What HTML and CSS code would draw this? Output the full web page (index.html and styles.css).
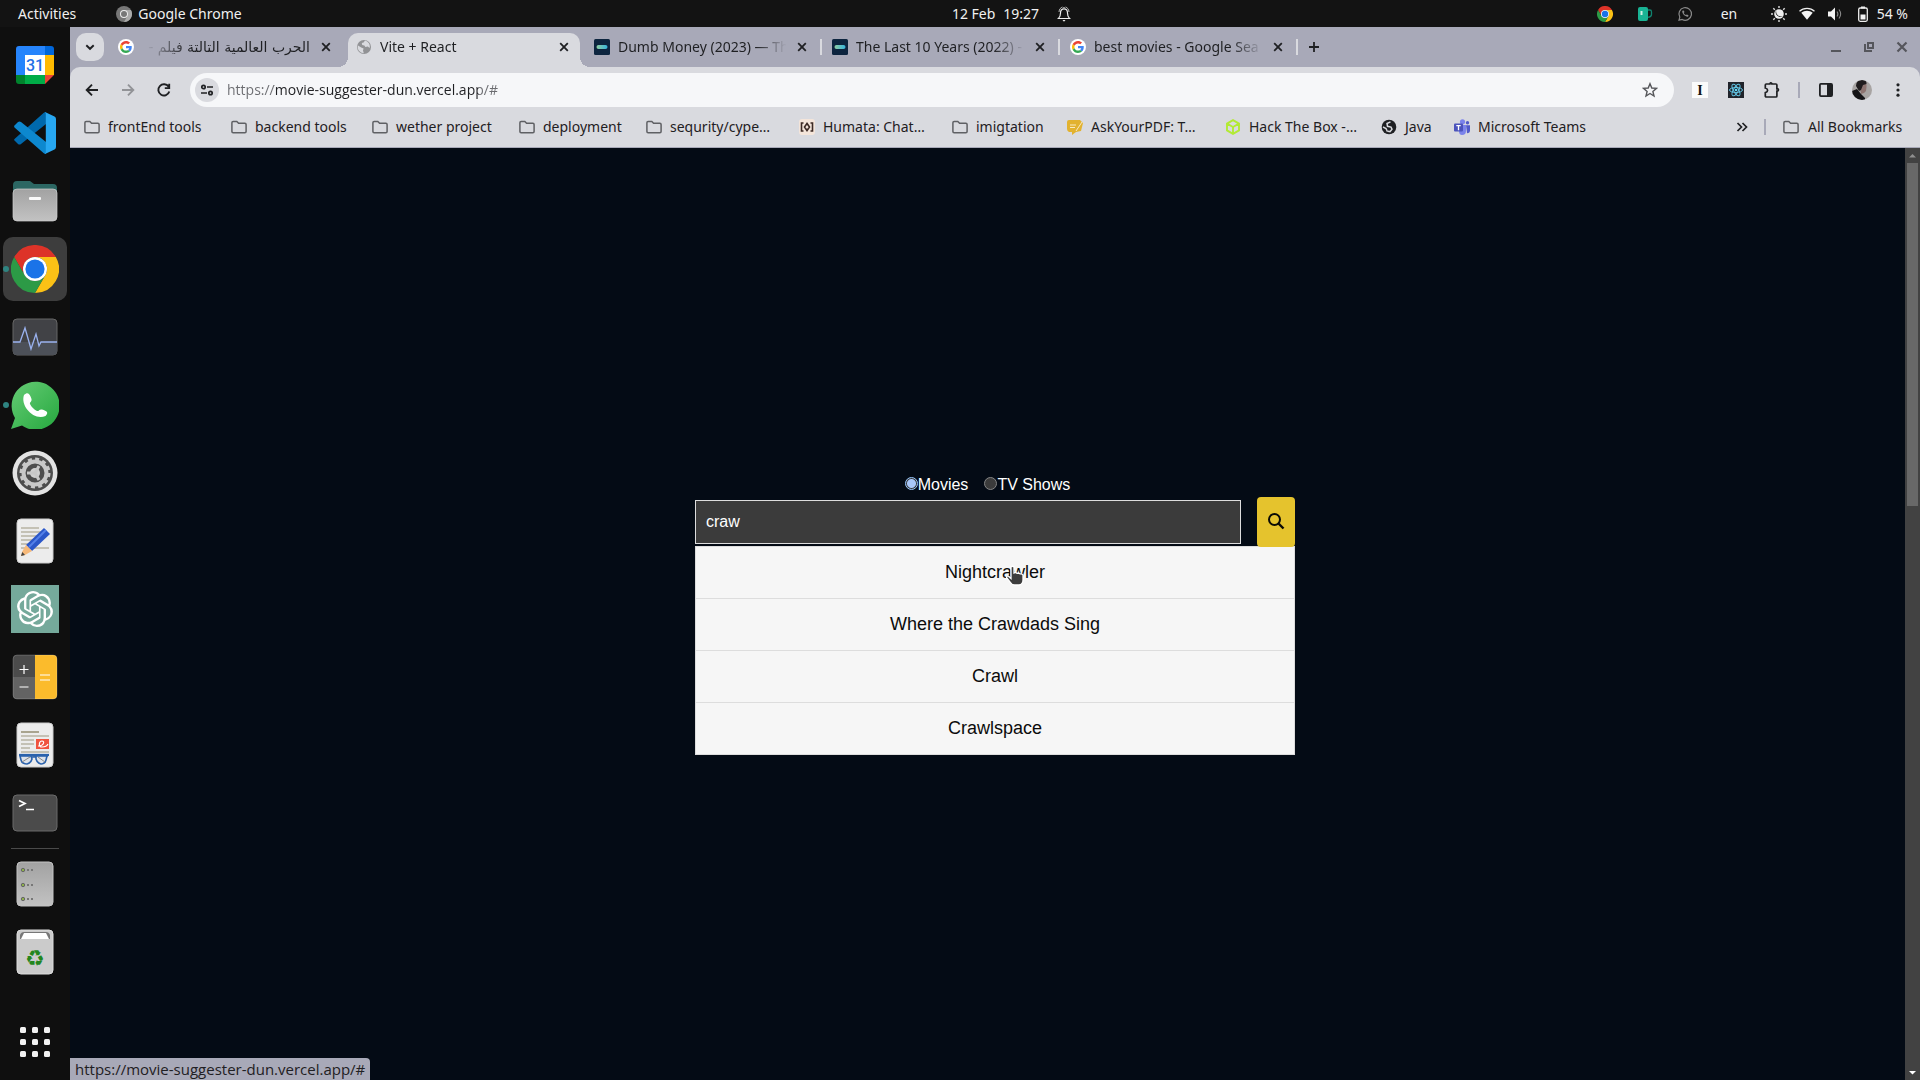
FILE: index.html
```html
<!DOCTYPE html>
<html lang="en">
<head>
<meta charset="utf-8">
<title>Vite + React</title>
<link rel="stylesheet" href="styles.css">
</head>
<body>
<svg class="defs" aria-hidden="true">
  <symbol id="chrome" viewBox="0 0 48 48">
    <path fill="#dd3328" d="M3.2 12A24 24 0 0 1 44.8 12H24A12 12 0 0 0 13.6 30Z"/>
    <path fill="#fbc116" d="M44.8 12A24 24 0 0 1 24 48L34.4 30A12 12 0 0 0 24 12Z"/>
    <path fill="#2c9a46" d="M24 48A24 24 0 0 1 3.2 12L13.6 30A12 12 0 0 0 34.4 30Z"/>
    <circle cx="24" cy="24" r="12" fill="#fff"/><circle cx="24" cy="24" r="9.6" fill="#1a73e8"/>
  </symbol>
  <symbol id="google" viewBox="0 0 16 16">
    <circle cx="8" cy="8" r="8" fill="#fff"/>
    <g transform="translate(2 2) scale(.25)">
      <path fill="#ea4335" d="M24 9.5c3.54 0 6.71 1.22 9.21 3.6l6.85-6.85C35.9 2.38 30.47 0 24 0 14.62 0 6.51 5.38 2.56 13.22l7.98 6.19C12.43 13.72 17.74 9.5 24 9.5z"/>
      <path fill="#4285f4" d="M46.98 24.55c0-1.57-.15-3.09-.38-4.55H24v9.02h12.94c-.58 2.96-2.26 5.48-4.78 7.18l7.73 6c4.51-4.18 7.09-10.36 7.09-17.65z"/>
      <path fill="#fbbc05" d="M10.53 28.59c-.48-1.45-.76-2.99-.76-4.59s.27-3.14.76-4.59l-7.98-6.19C.92 16.46 0 20.12 0 24c0 3.88.92 7.54 2.56 10.78l7.97-6.19z"/>
      <path fill="#34a853" d="M24 48c6.48 0 11.93-2.13 15.89-5.81l-7.73-6c-2.15 1.45-4.92 2.3-8.16 2.3-6.26 0-11.57-4.22-13.47-9.91l-7.98 6.19C6.51 42.62 14.62 48 24 48z"/>
    </g>
  </symbol>
  <symbol id="tmdb" viewBox="0 0 16 16">
    <defs><linearGradient id="tm"><stop offset="0" stop-color="#90cea1"/><stop offset="1" stop-color="#35b4dd"/></linearGradient></defs>
    <rect width="16" height="16" rx="1.5" fill="#0d253f"/><rect x="2.5" y="6" width="11" height="4" rx="2" fill="url(#tm)"/>
  </symbol>
  <symbol id="globe" viewBox="0 0 16 16">
    <circle cx="8" cy="8" r="7" fill="#919295"/>
    <path fill="#d9dadf" d="M9 1.6 7.6 3.4 5.8 4l.4 2 2.2.4 1 1.6 2.4-.4L13.6 9A6 6 0 0 0 9 1.6ZM2 6.4l3.2 2.2 2.4.8L7 11.6l.8 2.6A6 6 0 0 1 2 6.4Z"/>
  </symbol>
  <symbol id="x" viewBox="0 0 16 16"><path d="M4.2 4.2l7.6 7.6M11.8 4.2l-7.6 7.6" fill="none" stroke="currentColor" stroke-width="1.8"/></symbol>
  <symbol id="folder" viewBox="0 0 16 16"><path d="M.9 3.8q0-1.4 1.2-1.4h3.7l1.8 1.9h6.3q1.2 0 1.2 1.2v7q0 1.2-1.2 1.2H2.1q-1.2 0-1.2-1.2Z" fill="none" stroke="#5f6064" stroke-width="1.5"/></symbol>
</svg>

<header class="topbar">
  <div class="topbar-left">
    <button class="activities">Activities</button>
    <button class="appmenu">
      <svg width="16" height="16" viewBox="0 0 48 48"><circle cx="24" cy="24" r="24" fill="#777"/><path fill="#aaa" d="M44.8 12A24 24 0 0 1 24 48L34.4 30A12 12 0 0 0 24 12Z"/><circle cx="24" cy="24" r="12" fill="#eee"/><circle cx="24" cy="24" r="9" fill="#777"/></svg>
      Google Chrome
    </button>
  </div>
  <button class="clock"><span>12 Feb</span><span>19:27</span>
    <svg class="bell" width="16" height="16" viewBox="0 0 16 16"><path d="M2.5 12.5h11c-1.6-1.4-2-2.6-2-5.500 0-2.800-1.300-4.200-3.500-4.200S4.500 4.200 4.500 7c0 2.900-.4 4.100-2 5.500Z" fill="none" stroke="#eee" stroke-width="1.200"/><path d="M6.500 14h3l-1.500 1.700ZM6.800 1.800a1.300 1.300 0 0 1 2.400 0" fill="#eee"/><path d="M3 6c.2-2.800 1.600-4.400 3.500-5M13 6c-.2-2.800-1.600-4.400-3.500-5" fill="none" stroke="#bbb"/></svg>
  </button>
  <div class="tray">
    <svg width="16" height="16"><use href="#chrome"/></svg>
    <svg width="16" height="16" viewBox="0 0 16 16"><path d="M10.500 4h2.300q1.700 0 1.700 1.700v2.600q0 2.200-2.200 2.700l-1.800.4" fill="none" stroke="#10836f" stroke-width="1.300"/><rect x="1" y="1" width="10" height="14" rx="2" fill="#19b394"/><rect x="3.500" y="5" width="2" height="4" fill="#d4efe6"/></svg>
    <svg width="16" height="16" viewBox="0 0 16 16"><path d="M2 14.200l.8-3A6.300 6.300 0 1 1 5.200 13.500Z" fill="none" stroke="#8a8a8a" stroke-width="1.200"/><path d="M5.300 4.800c-.6 2.600 3 6.400 5.800 5.900l.4-1.400-1.600-.9-.9.700c-1-.4-1.800-1.300-2.200-2.200l.7-.8-.8-1.700Z" fill="#8a8a8a"/></svg>
    <span class="lang">en</span>
    <div class="status-icons">
      <svg width="16" height="16" viewBox="0 0 16 16"><path d="M8 0v2M8 14v2M0 8h2M14 8h2M2.300 2.300l1.500 1.500M12.200 12.200l1.500 1.500M2.300 13.700l1.500-1.500M12.200 3.800l1.500-1.500" stroke="#ddd" stroke-width="1.400"/><circle cx="8" cy="8" r="4.800" fill="#eee"/><path d="M5.500 3.800A4.500 4.500 0 0 0 11.800 10 4.800 4.800 0 0 1 5.500 3.800" fill="#131313"/><circle cx="9.200" cy="6.800" r="2.700" fill="#eee"/></svg>
      <svg width="16" height="16" viewBox="0 0 16 16"><path d="M.5 5.200C4.500 1.300 11.500 1.300 15.500 5.200" fill="none" stroke="#eee" stroke-width="1.200"/><path d="M2.300 6.800C5.500 3.900 10.500 3.900 13.700 6.800L8 13.800Z" fill="#f4f4f4"/></svg>
      <svg width="16" height="16" viewBox="0 0 16 16"><path d="M1 5.500h3L8 1.500v13L4 10.500H1Z" fill="#f4f4f4"/><path d="M10 5.500q1.800 2.500 0 5M12 3.500q3.300 4.500 0 9" fill="none" stroke="#888" stroke-width="1.100"/></svg>
      <svg width="16" height="16" viewBox="0 0 16 16"><path d="M6 .5h4v2H6Z" fill="#eee"/><rect x="3.700" y="2" width="8.600" height="13.300" rx="1.500" fill="none" stroke="#eee" stroke-width="1.300"/><path d="M5.500 8.500h5v5h-5Z" fill="#f4f4f4"/></svg>
    </div>
    <span class="battery">54 %</span>
  </div>
</header>

<div class="desktop">
  <nav class="dock" aria-label="Dock">
    <button aria-label="Calendar"><svg width="38" height="38" viewBox="0 0 38 38"><path d="M3 0h26v9H9v20H0V3Q0 0 3 0" fill="#2684fc"/><path d="M29 0h6q3 0 3 3v6h-9Z" fill="#0066da"/><path d="M29 9h9v20h-9Z" fill="#ffba00"/><path d="M9 29h20v9H9Z" fill="#00ac47"/><path d="M0 29h9v9H3q-3 0-3-3Z" fill="#00832d"/><path d="M29 29h9l-9 9Z" fill="#ea4335"/><path d="M9 9h20v20H9Z" fill="#fff"/><text x="19" y="25" text-anchor="middle" class="cal-day">31</text></svg></button>
    <button aria-label="Visual Studio Code"><svg width="42" height="42" viewBox="0 0 42 42"><path d="M0 28l4 4q1.500 1 3 0L32 12V0q-1.500 0-2.500 1L.5 27Z" fill="#0069ad"/><path d="M0 14l4-4q1.500-1 3 0L32 30v12q-1.500 0-2.500-1L.5 15.500Z" fill="#0d88cf"/><path d="M31 0l9.500 4.500q1.500.8 1.500 2.500v28q0 1.700-1.500 2.500L31 42q.8-.4.800-2V2q0-1.500-.8-2" fill="#27a7f1"/></svg></button>
    <button aria-label="Files"><svg width="46" height="42" viewBox="0 0 46 42"><defs><linearGradient id="gr" x2="0" y2="1"><stop stop-color="#a2a2a2"/><stop offset="1" stop-color="#c2c2c2"/></linearGradient></defs><path d="M1 30V5q0-4 4-4h13l4 3h19q4 0 4 4v22Z" fill="#2c6763"/><rect x="1" y="9" width="44" height="32" rx="4" fill="url(#gr)" stroke="#d0d0d0" stroke-width=".7"/><rect x="17" y="17" width="12" height="3" rx="1" fill="#fafafa"/></svg></button>
    <button class="running focused" aria-label="Google Chrome"><svg width="48" height="48"><use href="#chrome"/></svg></button>
    <button aria-label="System Monitor"><svg width="46" height="38" viewBox="0 0 46 38"><rect x="1" y="1" width="44" height="36" rx="4" fill="#414246" stroke="#666"/><path d="M1 24h44v9q0 4-4 4H5q-4 0-4-4Z" fill="#4c5058"/><path d="M1 24h7l5-14 6 21 5-15 3 12 2-4h16" fill="none" stroke="#9ab2ef" stroke-width="1.300"/></svg></button>
    <button class="running" aria-label="WhatsApp"><svg width="48" height="48" viewBox="0 0 48 48"><defs><linearGradient id="wa" x2="1" y2="1"><stop stop-color="#66cc75"/><stop offset="1" stop-color="#25a83e"/></linearGradient></defs><path d="M0 48l4-11A24 24 0 1 1 11 44.500Z" fill="url(#wa)"/><path d="M13 14c4-4 6-1 7.500 4 .5 3-2 3-1.500 5 1.500 3 4 5.500 7 7 2 .5 2-2 5-1.500 5 1.500 7 3 3.500 6.500C23 40 9 25 13 14Z" fill="#fff"/></svg></button>
    <button aria-label="Settings"><svg width="46" height="46" viewBox="0 0 46 46"><circle cx="23" cy="23" r="22.500" fill="#e3e3e3"/><circle cx="23" cy="23" r="18" fill="#4d4d4d"/><circle cx="23" cy="23" r="14" fill="none" stroke="#c8c8c8" stroke-width="3" stroke-dasharray="4 3.300"/><circle cx="23" cy="23" r="11.500" fill="none" stroke="#c8c8c8" stroke-width="4"/><circle cx="23" cy="23" r="5" fill="#d0d0d0"/><path d="M23 23h-8M23 23l4-7M23 23l4 7" stroke="#c8c8c8" stroke-width="3"/></svg></button>
    <button aria-label="Text Editor"><svg width="38" height="46" viewBox="0 0 38 46"><rect x="1" y="1" width="36" height="44" rx="4" fill="#ececec" stroke="#ccc"/><path d="M5 10h18M5 14h24M5 18h20M5 22h16M5 26h14M5 30h28" stroke="#c4c1b5" stroke-width="2"/><path d="M28 10l6 6-18 17-6-6Z" fill="#2b57c8"/><path d="M30 12l-17 17" stroke="#5480e8" stroke-width="2"/><path d="M10 27l6 6-7 4-4 1 1-4Z" fill="#f6b97a"/><path d="M5 38l1.300-4 2.700 3Z" fill="#444"/></svg></button>
    <button aria-label="ChatGPT"><svg width="48" height="48" viewBox="0 0 48 48"><path fill="#75a99b" d="M0 0h48v48H0Z"/><path fill="#fff" transform="translate(6 6) scale(1.500)" d="M22.2819 9.8211a5.9847 5.9847 0 0 0-.5157-4.9108 6.0462 6.0462 0 0 0-6.5098-2.9A6.0651 6.0651 0 0 0 4.9807 4.1818a5.9847 5.9847 0 0 0-3.9977 2.9 6.0462 6.0462 0 0 0 .7427 7.0966 5.98 5.98 0 0 0 .511 4.9107 6.051 6.051 0 0 0 6.5146 2.9001A5.9847 5.9847 0 0 0 13.2599 24a6.0557 6.0557 0 0 0 5.7718-4.2058 5.9894 5.9894 0 0 0 3.9977-2.9001 6.0557 6.0557 0 0 0-.7475-7.0729zm-9.022 12.6081a4.4755 4.4755 0 0 1-2.8764-1.0408l.1419-.0804 4.7783-2.7582a.7948.7948 0 0 0 .3927-.6813v-6.7369l2.02 1.1686a.071.071 0 0 1 .038.052v5.5826a4.504 4.504 0 0 1-4.4945 4.4944zm-9.6607-4.1254a4.4708 4.4708 0 0 1-.5346-3.0137l.142.0852 4.783 2.7582a.7712.7712 0 0 0 .7806 0l5.8428-3.3685v2.3324a.0804.0804 0 0 1-.0332.0615L9.74 19.9502a4.4992 4.4992 0 0 1-6.1408-1.6464zM2.3408 7.8956a4.485 4.485 0 0 1 2.3655-1.9728V11.6a.7664.7664 0 0 0 .3879.6765l5.8144 3.3543-2.0201 1.1685a.0757.0757 0 0 1-.071 0l-4.8303-2.7865A4.504 4.504 0 0 1 2.3408 7.872zm16.5963 3.8558L13.1038 8.364 15.1192 7.2a.0757.0757 0 0 1 .071 0l4.8303 2.7913a4.4944 4.4944 0 0 1-.6765 8.1042v-5.6772a.79.79 0 0 0-.407-.667zm2.0107-3.0231l-.142-.0852-4.7735-2.7818a.7759.7759 0 0 0-.7854 0L9.409 9.2297V6.8974a.0662.0662 0 0 1 .0284-.0615l4.8303-2.7866a4.4992 4.4992 0 0 1 6.6802 4.66zM8.3065 12.863l-2.02-1.1638a.0804.0804 0 0 1-.038-.0567V6.0742a4.4992 4.4992 0 0 1 7.3757-3.4537l-.142.0805L8.704 5.459a.7948.7948 0 0 0-.3927.6813zm1.0976-2.3654l2.602-1.4998 2.6069 1.4998v2.9994l-2.5974 1.4997-2.6067-1.4997Z"/></svg></button>
    <button aria-label="Calculator"><svg width="46" height="46" viewBox="0 0 46 46"><path d="M23 1v22H1V5q0-4 4-4Z" fill="#4b4b4b"/><path d="M1 23h22v22H5q-4 0-4-4Z" fill="#636363"/><path d="M23 1h18q4 0 4 4v36q0 4-4 4H23Z" fill="#fbbb2c"/><rect x="1" y="1" width="44" height="44" rx="4" fill="none" stroke="#fff" stroke-opacity=".2"/><path d="M7.500 15.500h9M12 11v9M7.500 33h9M28 21h10M28 26h10" stroke="#fff" stroke-width="1.200"/></svg></button>
    <button aria-label="Document Viewer"><svg width="38" height="46" viewBox="0 0 38 46"><rect x="1" y="1" width="36" height="44" rx="4" fill="#ececec" stroke="#ccc"/><path d="M5 10h18" stroke="#a9a48f" stroke-width="2"/><path d="M5 14h28M5 18h13M5 22h13M5 26h9M5 30h28" stroke="#c4c1b5" stroke-width="2"/><path d="M20 17h13v10H20Z" fill="#f0533f"/><path d="M22 24c6 0 7-5 4-5s-4 6 0 6 5-1 6-3" fill="none" stroke="#fff" stroke-width="1.200"/><path d="M4 34l10-1 4 1h2l4-1 8 1" fill="none" stroke="#555" stroke-width="1.500"/><path d="M4 34h11l1 3q-1 4-5 5-5 0-6-4ZM20 34h11l-1 4q-1 4-5 4-4-1-5-5ZM16 35h4" fill="#dde2ea" stroke="#2a62ad" stroke-width="1.600"/><path d="M3 33h30" stroke="#2a62ad" stroke-width="2.200"/><path d="M6 40l8-5M22 35l7 5" stroke="#888"/></svg></button>
    <button aria-label="Terminal"><svg width="46" height="38" viewBox="0 0 46 38"><rect x="1" y="1" width="44" height="36" rx="4" fill="#4b4b4b" stroke="#6a6a6a"/><path d="M7 6.500l6 3-6 3M14 15.500h8" fill="none" stroke="#fff" stroke-width="1.700"/></svg></button>
    <hr>
    <button aria-label="Server"><svg width="38" height="46" viewBox="0 0 38 46"><rect x="1" y="1" width="36" height="44" rx="4" fill="url(#gr)" stroke="#c4c4c4"/><g fill="#8db04a" stroke="#666"><circle cx="7" cy="9" r="1.700"/><circle cx="7" cy="24" r="1.700"/><circle cx="7" cy="38" r="1.700"/></g><path d="M11 9h2m2 0h2M11 24h2m2 0h2M11 38h2m2 0h2" stroke="#777" stroke-width="2"/></svg></button>
    <button aria-label="Trash"><svg width="38" height="46" viewBox="0 0 38 46"><rect x="1" y="1" width="36" height="44" rx="4" fill="#cbcbcb" stroke="#ddd"/><path d="M4 10V6q1-3 4-3h22q3 0 4 3v4Z" fill="#777"/><path d="M5 10l3-6h22l3 6Z" fill="#fff"/><text x="19" y="37" text-anchor="middle" class="recycle">♻</text></svg></button>
    <button class="show-apps" aria-label="Show Applications"><svg width="30" height="30" viewBox="0 0 30 30" fill="#f2f2f2"><rect width="6" height="6" rx="1.500"/><rect x="12" width="6" height="6" rx="1.500"/><rect x="24" width="6" height="6" rx="1.500"/><rect y="12" width="6" height="6" rx="1.500"/><rect x="12" y="12" width="6" height="6" rx="1.500"/><rect x="24" y="12" width="6" height="6" rx="1.500"/><rect y="24" width="6" height="6" rx="1.500"/><rect x="12" y="24" width="6" height="6" rx="1.500"/><rect x="24" y="24" width="6" height="6" rx="1.500"/></svg></button>
  </nav>

  <div class="browser">
    <div class="tabstrip">
      <button class="tab-search" aria-label="Search tabs"><svg width="16" height="16" viewBox="0 0 16 16"><path d="M4.300 6.200L8 9.800l3.700-3.600" fill="none" stroke="#1f2023" stroke-width="1.900"/></svg></button>
      <div class="tabs">
        <div class="tab"><svg width="16" height="16"><use href="#google"/></svg><span class="title rtl" dir="rtl" lang="ar">الحرب العالمية التالتة فيلم -</span><button aria-label="Close"><svg width="16" height="16"><use href="#x"/></svg></button></div>
        <div class="tab active"><svg width="16" height="16"><use href="#globe"/></svg><span class="title">Vite + React</span><button aria-label="Close"><svg width="16" height="16"><use href="#x"/></svg></button></div>
        <div class="tab divided"><svg width="16" height="16"><use href="#tmdb"/></svg><span class="title">Dumb Money (2023) — Th</span><button aria-label="Close"><svg width="16" height="16"><use href="#x"/></svg></button></div>
        <div class="tab divided"><svg width="16" height="16"><use href="#tmdb"/></svg><span class="title">The Last 10 Years (2022) -</span><button aria-label="Close"><svg width="16" height="16"><use href="#x"/></svg></button></div>
        <div class="tab divided"><svg width="16" height="16"><use href="#google"/></svg><span class="title">best movies - Google Sea</span><button aria-label="Close"><svg width="16" height="16"><use href="#x"/></svg></button></div>
      </div>
      <button class="new-tab" aria-label="New tab"><svg width="16" height="16" viewBox="0 0 16 16"><path d="M8 3v10M3 8h10" stroke="#1f2023" stroke-width="1.800"/></svg></button>
      <div class="window-controls">
        <button aria-label="Minimize"><svg width="16" height="16" viewBox="0 0 16 16"><path d="M3 12h10" stroke="#55565c" stroke-width="2"/></svg></button>
        <button aria-label="Restore"><svg width="16" height="16" viewBox="0 0 16 16"><path d="M7 4h5v5H7ZM4 5v7h7" fill="none" stroke="#55565c" stroke-width="2"/></svg></button>
        <button aria-label="Close window"><svg width="16" height="16" viewBox="0 0 16 16"><path d="M3.500 3.500l9 9M12.500 3.500l-9 9" stroke="#55565c" stroke-width="2.200"/></svg></button>
      </div>
    </div>

    <div class="toolbar">
      <div class="nav-buttons">
        <button aria-label="Back"><svg width="16" height="16" viewBox="0 0 16 16"><path d="M14 8H3M8 2.700L2.700 8 8 13.300" fill="none" stroke="#1f2023" stroke-width="1.900"/></svg></button>
        <button aria-label="Forward"><svg width="16" height="16" viewBox="0 0 16 16"><path d="M2 8h11M8 2.700L13.300 8 8 13.300" fill="none" stroke="#929397" stroke-width="1.900"/></svg></button>
        <button aria-label="Reload"><svg width="16" height="16" viewBox="0 0 16 16"><path d="M13.300 9.500A5.600 5.600 0 1 1 12.600 4.800M13.200 1.800v4.300H8.800" fill="none" stroke="#1f2023" stroke-width="1.900"/></svg></button>
      </div>
      <div class="omnibox">
        <button class="site-info" aria-label="View site information"><svg width="16" height="16" viewBox="0 0 16 16"><g fill="none" stroke="#1f2023" stroke-width="1.700"><circle cx="4.500" cy="5" r="1.700"/><circle cx="11.500" cy="11" r="1.700"/><path d="M8 5h6M2 11h6"/></g></svg></button>
        <input class="url" type="text" aria-label="Address" value="https://movie-suggester-dun.vercel.app/#">
        <button aria-label="Bookmark this tab"><svg width="16" height="16" viewBox="0 0 16 16"><path d="M8 1.700l1.800 4.300 4.700.4-3.600 3 1.100 4.600L8 11.500 4 14l1.100-4.600-3.600-3L6.200 6Z" fill="none" stroke="#55565a" stroke-width="1.400"/></svg></button>
      </div>
      <div class="extensions">
        <button aria-label="Instapaper"><svg width="16" height="16" viewBox="0 0 16 16"><path fill="#fafafa" d="M0 0h16v16H0Z"/><text x="8" y="13" text-anchor="middle" class="insta">I</text></svg></button>
        <button aria-label="React Developer Tools"><svg width="16" height="16" viewBox="0 0 16 16"><path fill="#20232a" d="M0 0h16v16H0Z"/><g fill="none" stroke="#61c3e3"><ellipse cx="8" cy="8" rx="6.500" ry="2.500"/><ellipse cx="8" cy="8" rx="6.500" ry="2.500" transform="rotate(60 8 8)"/><ellipse cx="8" cy="8" rx="6.500" ry="2.500" transform="rotate(120 8 8)"/></g><circle cx="8" cy="8" r="1.300" fill="#61dafb"/></svg></button>
        <button aria-label="Extensions"><svg width="18" height="18" viewBox="0 0 18 18"><path d="M2.300 4q0-1 1-1h3.600V2.600q.8-1.400 2 0V3h4q1 0 1 1v3.800h.8q1.500.9 0 2.200h-.8v5q0 1-1 1H3.300q-1 0-1-1v-3.400q2.300-.6 2.300-2.300T2.300 7Z" fill="none" stroke="#1f2023" stroke-width="1.700"/></svg></button>
        <span class="sep"></span>
        <button aria-label="Side panel"><svg width="16" height="16" viewBox="0 0 16 16"><rect x="1.900" y="1.900" width="12.200" height="12.200" rx="1" fill="none" stroke="#1f2023" stroke-width="1.800"/><path d="M9 2h5v12H9Z" fill="#1f2023"/></svg></button>
        <button aria-label="Profile"><svg width="20" height="20" viewBox="0 0 20 20"><defs><clipPath id="av"><circle cx="10" cy="10" r="10"/></clipPath></defs><g clip-path="url(#av)"><path fill="#a8a4a3" d="M0 0h20v20H0Z"/><path d="M8 8q0-6 4-6 3 1 2.500 5l-.5 4-2 2-3 1Z" fill="#8d7370"/><path d="M4 6Q4 0 10 0q5 0 4.500 4l-3.500 1-2 5-2 1Z" fill="#201c1e"/><path d="M0 11l5-2 4 5 4 4 0 3H0Z" fill="#141316"/></g></svg></button>
        <button aria-label="Menu"><svg width="16" height="16" viewBox="0 0 16 16" fill="#1f2023"><circle cx="8" cy="2.800" r="1.600"/><circle cx="8" cy="8" r="1.600"/><circle cx="8" cy="13.200" r="1.600"/></svg></button>
      </div>
    </div>

    <nav class="bookmarks" aria-label="Bookmarks">
      <div class="bookmark-list">
        <a href="#"><svg width="16" height="16"><use href="#folder"/></svg>frontEnd tools</a>
        <a href="#"><svg width="16" height="16"><use href="#folder"/></svg>backend tools</a>
        <a href="#"><svg width="16" height="16"><use href="#folder"/></svg>wether project</a>
        <a href="#"><svg width="16" height="16"><use href="#folder"/></svg>deployment</a>
        <a href="#"><svg width="16" height="16"><use href="#folder"/></svg>sequrity/cype…</a>
        <a href="#"><svg width="16" height="16" viewBox="0 0 16 16"><rect width="16" height="16" rx="3" fill="#f4e5da"/><path d="M4.500 4H2.500v8h2M11.500 4h2v8h-2M8 4.500L5.500 8 8 11.500 10.500 8Z" fill="none" stroke="#3c2a25" stroke-width="1.600"/></svg>Humata: Chat…</a>
        <a href="#"><svg width="16" height="16"><use href="#folder"/></svg>imigtation</a>
        <a href="#"><svg width="16" height="16" viewBox="0 0 16 16"><path d="M2 1h11l3 3-2 8-5 1-4 3v-3H2Q0 12 0 10V3q0-2 2-2" fill="#e2b22f"/><path d="M3 6h6M3 8.500h5M9 12l6-9" stroke="#f9eac0"/></svg>AskYourPDF: T…</a>
        <a href="#"><svg width="16" height="16" viewBox="0 0 16 16"><path d="M8 1.200l6 3.400v6.800l-6 3.400-6-3.400V4.600ZM2 4.600L8 8l6-3.400M8 8v6.800" fill="none" stroke="#b2ea34" stroke-width="1.900"/></svg>Hack The Box -…</a>
        <a href="#"><svg width="16" height="16" viewBox="0 0 16 16"><circle cx="8" cy="8" r="7.300" fill="#1f2023"/><path d="M9.500 2.800L6 4.500l.5 2.800 3.500.8 1 2-2 2.500-2-.3M2 8l3 1.500 1.500 3.300" fill="none" stroke="#d9dadf" stroke-width="1.500"/></svg>Java</a>
        <a href="#"><svg width="16" height="16" viewBox="0 0 16 16"><circle cx="8.500" cy="2.800" r="2.600" fill="#7b83eb"/><circle cx="13.500" cy="3.700" r="1.700" fill="#5059c9"/><path d="M5 6h7v6q0 4-4 4-3 0-3-4Z" fill="#7b83eb"/><path d="M12 6.200h4v5q0 3-3 3Z" fill="#5059c9"/><rect y="4.500" width="9" height="8" rx="1" fill="#4b53bc"/><path d="M2.300 6.700h4.400M4.500 6.700v4.500" stroke="#fff" stroke-width="1.300"/></svg>Microsoft Teams</a>
      </div>
      <button class="overflow" aria-label="More bookmarks"><svg width="16" height="16" viewBox="0 0 16 16"><path d="M3.500 4l4 4-4 4M8.500 4l4 4-4 4" fill="none" stroke="#1f2023" stroke-width="1.700"/></svg></button>
      <span class="sep"></span>
      <a class="all" href="#"><svg width="16" height="16"><use href="#folder"/></svg>All Bookmarks</a>
    </nav>

    <div class="viewport">
      <main class="page">
        <form class="search" onsubmit="return false">
          <div class="kinds">
            <label><input type="radio" name="kind" checked>Movies</label>
            <label><input type="radio" name="kind">TV Shows</label>
          </div>
          <div class="search-row">
            <input class="query" type="text" aria-label="Search" value="craw">
            <button class="go" aria-label="Search"><svg width="18" height="18" viewBox="0 0 18 18"><circle cx="7.500" cy="7.500" r="5.500" fill="none" stroke="#0b0b06" stroke-width="2"/><path d="M11.500 11.500l5 5" stroke="#0b0b06" stroke-width="2.400"/></svg></button>
          </div>
          <ul class="suggestions">
            <li><a href="#">Nightcrawler</a>
              <svg class="cursor" width="20" height="22" viewBox="0 0 20 22"><path d="M6 2q1.500-1.500 3 0V8l1.500-.5 1.500.8 1.500-.3 1.500.8h1.500l1.500 1.200v5q0 4.500-4 5H9.500q-2.500 0-4-2.500L1.500 12.500q0-1.800 2-1.300L6 13.500Z" fill="#3d3d3d" stroke="#fff" stroke-width="1.300"/></svg>
            </li>
            <li><a href="#">Where the Crawdads Sing</a></li>
            <li><a href="#">Crawl</a></li>
            <li><a href="#">Crawlspace</a></li>
          </ul>
        </form>
        <div class="link-status">https://movie-suggester-dun.vercel.app/#</div>
      </main>
      <div class="scrollbar" aria-hidden="true">
        <svg width="15" height="15" viewBox="0 0 15 15"><path d="M4 9.500h7L7.500 6Z" fill="#8f8f8f"/></svg>
        <div class="track"><div class="thumb"></div></div>
        <svg width="15" height="15" viewBox="0 0 15 15"><path d="M4 6h7L7.500 9.500Z" fill="#fff"/></svg>
      </div>
    </div>
  </div>
</div>
</body>
</html>
```
FILE: styles.css
```css
* { box-sizing: border-box; }

body {
  margin: 0;
  height: 100vh;
  display: flex;
  flex-direction: column;
  overflow: hidden;
  font: 14px/20px "Noto Sans", "DejaVu Sans", sans-serif;
  color: #1f2023;
  background: #0f0f0f;
}

button {
  display: flex;
  align-items: center;
  justify-content: center;
  padding: 0;
  border: 0;
  background: none;
  font: inherit;
  color: inherit;
}

a { color: inherit; text-decoration: none; }
svg { display: block; flex: none; }
.defs { position: absolute; width: 0; height: 0; }

/* Desktop top bar */
.topbar {
  display: grid;
  grid-template-columns: 1fr auto 1fr;
  align-items: center;
  height: 27px;
  padding: 0 12px 0 18px;
  background: #131313;
  color: #f0f0f0;
}
.topbar-left { display: flex; gap: 40px; }
.appmenu { gap: 6px; }
.clock { gap: 8px; padding-left: 98px; }
.bell { margin-left: 9px; }
.tray { display: flex; align-items: center; justify-content: flex-end; gap: 24px; }
.lang { width: 20px; margin-left: 4px; }
.status-icons { display: flex; gap: 12px; margin-left: 6px; }
.battery { margin-left: -18px; white-space: nowrap; }

.desktop { display: flex; flex: 1; min-height: 0; }

/* Dock */
.dock {
  display: flex;
  flex-direction: column;
  flex: none;
  width: 70px;
  padding: 4px 0;
}
.dock button { position: relative; height: 68px; }
.dock hr { width: 48px; height: 1px; margin: 1px auto; border: 0; background: #4a4a4a; }
.dock .show-apps { margin-top: auto; }
.running::before {
  content: "";
  position: absolute;
  left: 3px;
  top: 31px;
  width: 6px;
  height: 6px;
  border-radius: 50%;
  background: #2f8481;
}
.dock .focused {
  height: 64px;
  margin: 2px 3px;
  border-radius: 10px;
  background: #3d3d3d;
}
.dock .focused::before { left: 0; top: 29px; }
.cal-day { font: 500 16px Roboto, sans-serif; fill: #1f6fe5; }
.recycle { font: 22px "DejaVu Sans", sans-serif; fill: #23861d; }

/* Browser window */
.browser { display: flex; flex-direction: column; flex: 1; min-width: 0; background: #a8a9b8; }
.tabstrip { display: flex; align-items: flex-start; height: 40px; padding: 6px 0 0 6px; }
.tab-search { width: 28px; height: 28px; margin-right: 3px; border-radius: 10px; background: #d9dadf; }
.tabs { display: flex; }
.tab {
  position: relative;
  display: flex;
  align-items: center;
  width: 238px;
  height: 34px;
  padding: 0 11px 6px;
}
.tab .title {
  flex: 1;
  min-width: 0;
  margin: 0 4px 0 8px;
  overflow: hidden;
  white-space: nowrap;
  mask-image: linear-gradient(90deg, #000 80%, transparent 98%);
}
.tab .title.rtl {
  margin: 0 8px;
  font-family: "DejaVu Sans", sans-serif;
  mask-image: linear-gradient(270deg, #000 72%, transparent 98%);
}
.tab.divided::after {
  content: "";
  position: absolute;
  right: -1px;
  top: 6px;
  width: 2px;
  height: 16px;
  background: #d9dadf;
}
.tab.active { z-index: 0; }
.tab.active::before {
  content: "";
  position: absolute;
  z-index: -1;
  inset: 0 3px;
  border-radius: 10px 10px 0 0;
  background: #d9dadf;
}
.tab.active::after {
  content: "";
  position: absolute;
  z-index: -1;
  inset: auto -7px 0;
  height: 10px;
  background:
    radial-gradient(circle at 0 0, transparent 10px, #d9dadf 10px) no-repeat left / 10px 10px,
    radial-gradient(circle at 100% 0, transparent 10px, #d9dadf 10px) no-repeat right / 10px 10px;
}
.new-tab { width: 28px; height: 28px; margin-left: 3px; }
.window-controls { display: flex; gap: 17px; margin: 6px 10px 0 auto; }

.toolbar {
  display: flex;
  align-items: center;
  height: 46px;
  padding: 0 12px 0 14px;
  border-radius: 10px 10px 0 0;
  background: #d9dadf;
}
.nav-buttons { display: flex; gap: 20px; margin-right: 18px; }
.omnibox {
  display: flex;
  align-items: center;
  flex: 1;
  height: 34px;
  padding: 0 16px 0 5px;
  border-radius: 17px;
  background: #f6f7f9;
}
.site-info { width: 24px; height: 24px; border-radius: 50%; background: #d9dadf; }
.url {
  flex: 1;
  padding: 0;
  margin: 0 8px;
  border: 0;
  outline: 0;
  font: 14px/20px "Open Sans", sans-serif;
  color: transparent;
  background: linear-gradient(90deg, #6b6c70 47px, #1f2023 47px 252px, #6b6c70 252px);
  background-clip: text;
}
.extensions { display: flex; align-items: center; gap: 16px; margin-left: 16px; }
.extensions button { width: 20px; height: 20px; }
.insta { font: bold 14px "Liberation Serif", serif; fill: #111; }
.sep { width: 2px; height: 16px; background: #a8a9b8; }

.bookmarks {
  display: flex;
  align-items: center;
  height: 34px;
  padding: 0 15px 6px 14px;
  background: #d9dadf;
}
.bookmarks a { display: flex; align-items: center; gap: 8px; white-space: nowrap; }
.bookmark-list {
  display: grid;
  grid-template-columns: 147px 141px 147px 127px 153px 153px 115px 158px 156px 73px auto;
}
.overflow { margin-left: auto; margin-right: 14px; }
.bookmarks .all { gap: 9px; min-width: 122px; margin-left: 17px; }

/* Page area */
.viewport { display: flex; flex: 1; min-height: 0; margin-top: 1px; }
.page {
  position: relative;
  flex: 1;
  background: #040b15;
  color: #fff;
  font: 16px/20px "Liberation Sans", Arial, sans-serif;
}
.search { max-width: 615px; margin: 0 auto; padding: 327px 0 0 15px; }
.kinds { display: flex; justify-content: center; gap: 16px; margin-right: 15px; }
.kinds label { display: flex; align-items: center; }
.kinds input {
  appearance: none;
  width: 13px;
  height: 13px;
  margin: 0 0 3px;
  border: 1px solid #858585;
  border-radius: 50%;
  background: #3b3b3b;
}
.kinds input:checked {
  border-color: #99c8ff;
  background: radial-gradient(circle, #a8c7fa 4px, #3b3b3b 5px);
}
.search-row { position: relative; z-index: 1; display: flex; align-items: center; gap: 16px; margin-top: 2px; }
.query {
  flex: 1;
  min-width: 0;
  height: 44px;
  padding: 0 10px;
  border: 1px solid #ddd;
  background: #3b3b3b;
  font: inherit;
  color: #fff;
}
.go { width: 38px; height: 50px; padding-bottom: 2px; border-radius: 4px; background: #e5c32d; }
.suggestions {
  margin: -1px 0 0;
  padding: 0;
  list-style: none;
  border: 1px solid #ddd;
  border-bottom: 0;
  background: #f6f6f6;
  color: #0b0b0b;
  font-size: 18px;
}
.suggestions li { position: relative; border-bottom: 1px solid #ddd; text-align: center; }
.suggestions a { display: block; padding: 15px 10px 16px; }
.cursor { position: absolute; left: calc(50% + 10px); top: 18px; }

.link-status {
  position: absolute;
  left: 0;
  bottom: 0;
  width: 300px;
  height: 22px;
  padding: 0 5px;
  border-radius: 0 4px 0 0;
  background: #a8a9b8;
  color: #1f2023;
  font: 15px/22px "Open Sans", sans-serif;
  white-space: nowrap;
}

.scrollbar { display: flex; flex-direction: column; flex: none; width: 15px; background: #424242; }
.track { flex: 1; padding: 0 2px; }
.thumb { height: 38%; background: #686868; }
```
